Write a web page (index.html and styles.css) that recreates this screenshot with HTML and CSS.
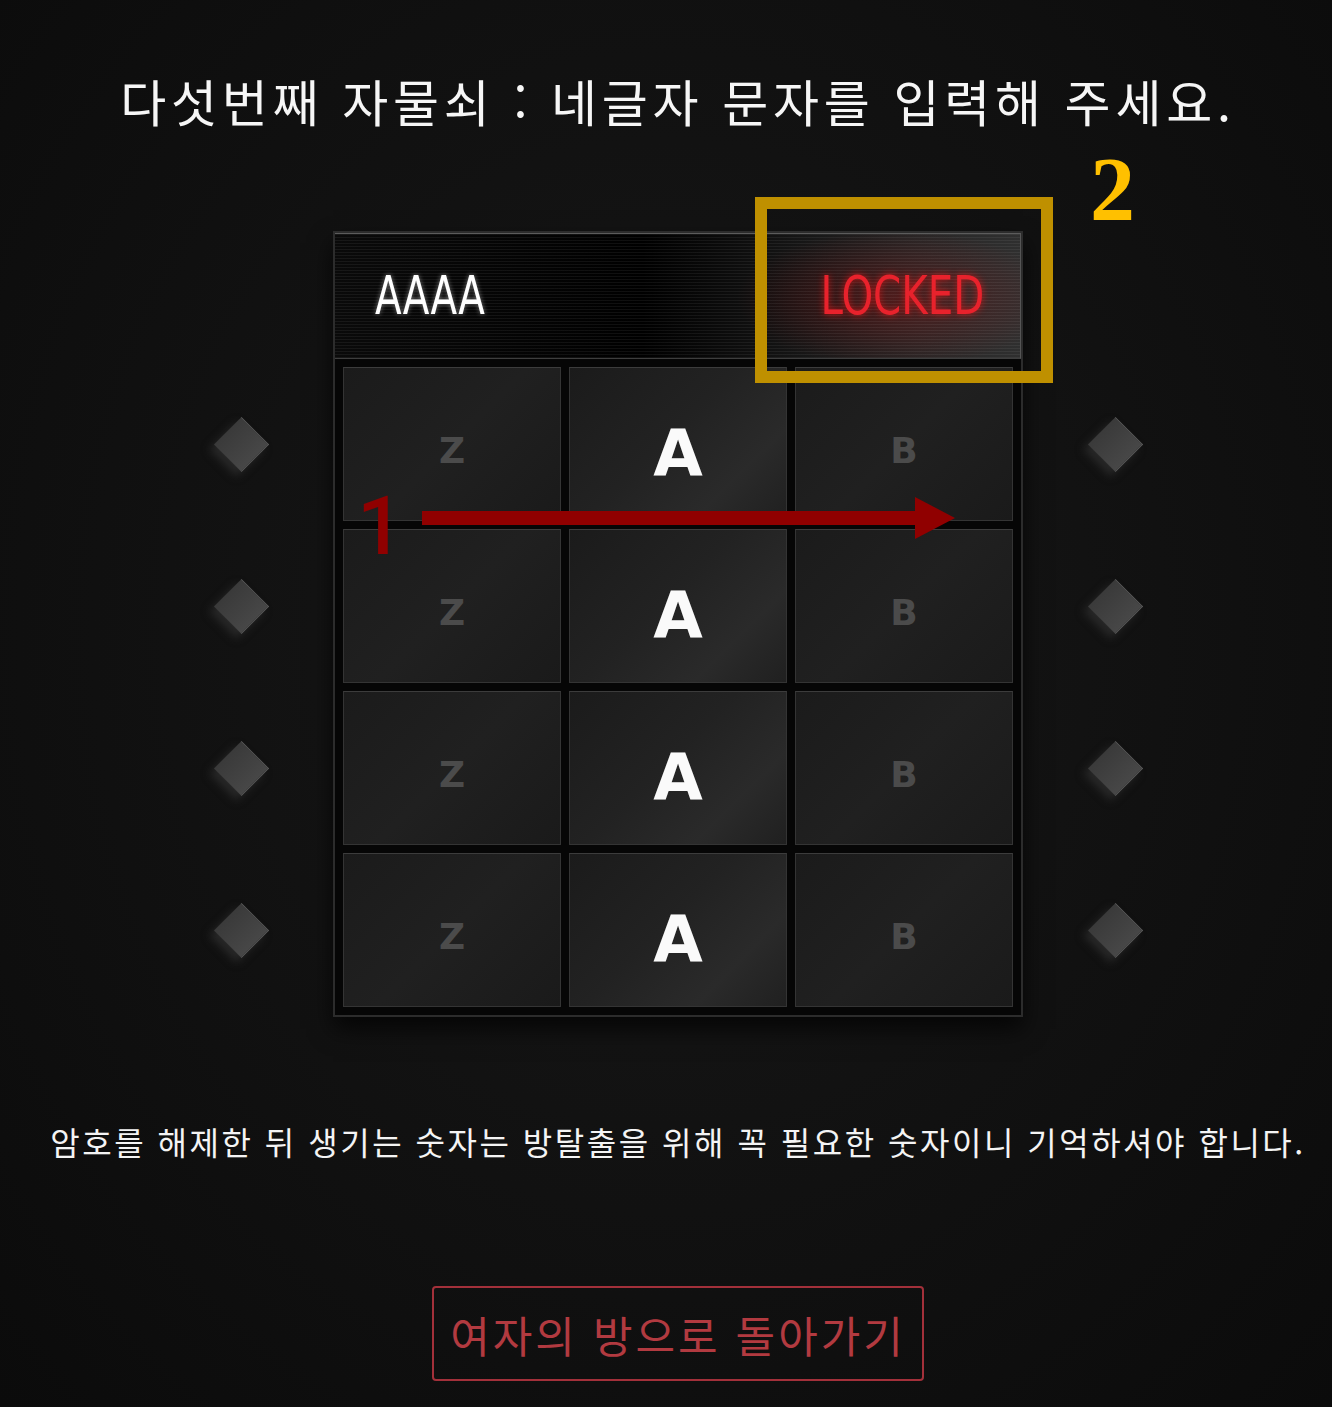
FILE: index.html
```html
<!DOCTYPE html>
<html lang="ko">
<head>
<meta charset="utf-8">
<title>다섯번째 자물쇠</title>
<link rel="stylesheet" href="styles.css">
</head>
<body>
<div class="page">
  <h1 class="title">다섯번째 자물쇠 : 네글자 문자를 입력해 주세요.</h1>

  <div class="stage">
    <div class="side">
      <div class="slot"><span class="diamond"></span></div>
      <div class="slot"><span class="diamond"></span></div>
      <div class="slot"><span class="diamond"></span></div>
      <div class="slot"><span class="diamond"></span></div>
    </div>

    <div class="panel">
      <div class="display">
        <span class="code">AAAA</span>
        <span class="status">LOCKED</span>
      </div>
      <div class="grid">
        <div class="cell dim">Z</div><div class="cell mid">A</div><div class="cell dim">B</div>
        <div class="cell dim">Z</div><div class="cell mid">A</div><div class="cell dim">B</div>
        <div class="cell dim">Z</div><div class="cell mid">A</div><div class="cell dim">B</div>
        <div class="cell dim">Z</div><div class="cell mid">A</div><div class="cell dim">B</div>
      </div>

      <div class="mark-box"></div>
      <div class="mark-num two">2</div>
      <div class="mark-num one">1</div>
      <svg class="arrow" width="533" height="42" viewBox="0 0 533 42">
        <rect x="0" y="14" width="495" height="14" fill="#900000"/>
        <polygon points="493,0 533,21 493,42" fill="#900000"/>
      </svg>
    </div>

    <div class="side">
      <div class="slot"><span class="diamond"></span></div>
      <div class="slot"><span class="diamond"></span></div>
      <div class="slot"><span class="diamond"></span></div>
      <div class="slot"><span class="diamond"></span></div>
    </div>
  </div>

  <p class="note">암호를 해제한 뒤 생기는 숫자는 방탈출을 위해 꼭 필요한 숫자이니 기억하셔야 합니다.</p>

  <a class="back" href="#">여자의 방으로 돌아가기</a>
</div>
</body>
</html>
```

FILE: styles.css
```css
html, body {
  margin: 0;
  padding: 0;
  height: 1407px;
  overflow: hidden;
}
body {
  background: radial-gradient(ellipse at 50% 45%, #181818 0%, #121212 45%, #0b0b0b 100%);
  color: #f4f4f4;
  font-family: "Noto Sans CJK KR", "Noto Sans", sans-serif;
}
.page {
  box-sizing: border-box;
  width: 1332px;
  padding: 70px 0 0 24px;
  display: flex;
  flex-direction: column;
  align-items: center;
}
.title {
  margin: 0;
  font-size: 50px;
  line-height: 60px;
  font-weight: 400;
  letter-spacing: 4.8px;
  color: #f6f6f6;
  white-space: nowrap;
}
.stage {
  margin-top: 101px;
  display: flex;
  gap: 64px;
}
.side {
  width: 56px;
  padding-top: 136px;
  display: flex;
  flex-direction: column;
  gap: 8px;
}
.slot {
  height: 154px;
  display: flex;
  align-items: center;
  justify-content: center;
}
.diamond {
  width: 38px;
  height: 38px;
  transform: rotate(45deg);
  background: linear-gradient(90deg, #3a3a3a, #474747);
  border-top: 1px solid #5a5a5a;
  border-right: 1px solid #5a5a5a;
  box-shadow: 0 7px 8px rgba(42, 42, 42, 0.9);
}
.panel {
  position: relative;
  width: 686px;
  border: 2px solid #2c2c2c;
  background: #070707;
  box-shadow: 0 12px 22px rgba(0, 0, 0, 0.7);
}
.display {
  height: 124px;
  border-top: 1px solid #5c5c5c;
  border-bottom: 1px solid #3e3e3e;
  border-right: 1px solid #555;
  display: flex;
  align-items: center;
  justify-content: space-between;
  padding: 0 36px 0 40px;
  background:
    repeating-linear-gradient(to bottom, rgba(255,255,255,0.06) 0 1px, transparent 1px 3px),
    radial-gradient(ellipse 160px 70px at 82% 52%, rgba(190, 10, 10, 0.28), transparent 100%),
    linear-gradient(to right, #0a0a0a 0%, #000 45%, #101010 62%, #262626 85%, #2f2f2f 100%);
}
.code, .status {
  display: inline-block;
  font-family: "DejaVu Sans Condensed", "DejaVu Sans", sans-serif;
  font-stretch: condensed;
  font-size: 54px;
  line-height: 60px;
}
.code {
  color: #fff;
  transform: scaleX(0.8);
  transform-origin: left center;
  text-shadow: 0 0 6px rgba(255, 255, 255, 0.45);
}
.status {
  color: #e8222c;
  transform: scaleX(0.83);
  transform-origin: right center;
  text-shadow: 0 0 8px rgba(255, 20, 20, 0.7);
}
.grid {
  display: grid;
  grid-template-columns: repeat(3, 218px);
  grid-auto-rows: 154px;
  gap: 8px;
  padding: 8px 8px 8px 8px;
  background: #060606;
}
.cell {
  box-sizing: border-box;
  border: 1px solid #343434;
  border-top-color: #3c3c3c;
  background: linear-gradient(135deg, #1b1b1b 0%, #202020 50%, #1a1a1a 100%);
  display: flex;
  align-items: center;
  justify-content: center;
  padding-top: 12px;
  font-family: "DejaVu Sans", sans-serif;
  font-weight: 700;
}
.cell.dim {
  color: #4b4b4b;
  font-size: 36px;
}
.cell.mid {
  color: #fafafa;
  font-size: 64px;
  padding-top: 20px;
  background: linear-gradient(135deg, #1b1b1b 0%, #222 45%, #2a2a2a 75%, #202020 100%);
}
.mark-box {
  position: absolute;
  left: 420px;
  top: -36px;
  width: 274px;
  height: 162px;
  border: 12px solid #bf9000;
}
.mark-num {
  position: absolute;
  line-height: 1;
}
.mark-num.two {
  left: 755px;
  top: -88px;
  font-family: "Liberation Serif", serif;
  font-weight: 700;
  font-size: 90px;
  color: #ffc000;
}
.mark-num.one {
  left: 22px;
  top: 252px;
  font-family: Roboto, "Noto Sans", sans-serif;
  font-weight: 500;
  font-size: 82px;
  color: #900000;
}
.arrow {
  position: absolute;
  left: 87px;
  top: 264px;
}
.note {
  margin: 104px 0 0;
  font-size: 32px;
  line-height: 40px;
  letter-spacing: 2.5px;
  color: #f4f4f4;
  white-space: nowrap;
}
.back {
  margin-top: 125px;
  box-sizing: border-box;
  width: 492px;
  height: 95px;
  border: 2px solid #a3303a;
  border-radius: 4px;
  display: flex;
  align-items: center;
  justify-content: center;
  font-size: 43px;
  color: #b23a40;
  text-decoration: none;
  letter-spacing: 3px;
}
```
